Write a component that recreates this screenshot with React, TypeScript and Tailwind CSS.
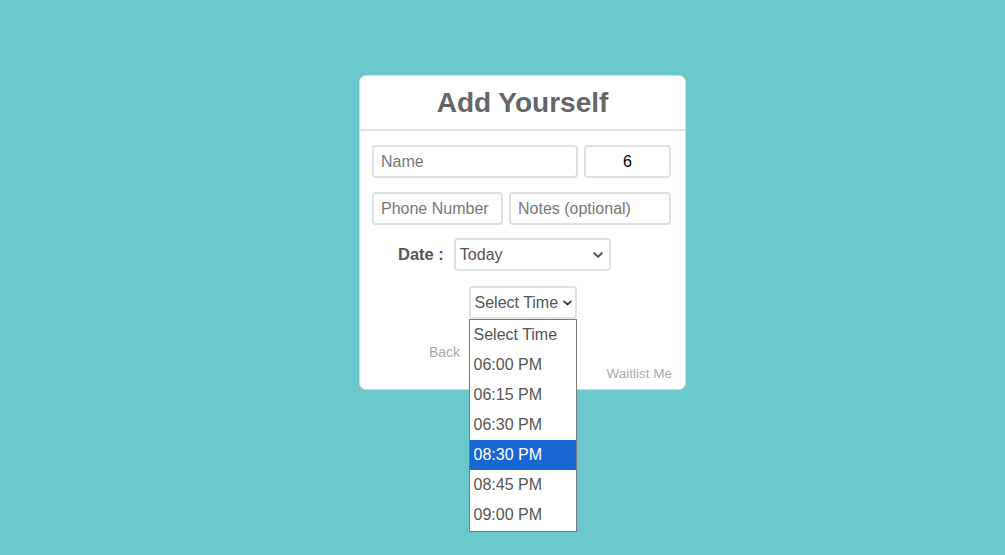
import React from "react";

const times = ["Select Time", "06:00 PM", "06:15 PM", "06:30 PM", "08:30 PM", "08:45 PM", "09:00 PM"];

function Chevron({ className }: { className?: string }) {
  return (
    <svg viewBox="0 0 10 6" className={className} fill="none" stroke="currentColor" strokeWidth="1.8" strokeLinecap="round" strokeLinejoin="round">
      <path d="M1.2 1.2 5 4.8 8.8 1.2" />
    </svg>
  );
}

export default function App() {
  return (
    <div className="min-h-[555px] w-full bg-[#6ac8cc] pl-[359px] pt-[75px] font-['Liberation_Sans',Arial,sans-serif]">
      <div className="relative w-[327px] rounded-[7px] border border-[#d8d8d8] bg-white">
        {/* header */}
        <div className="flex h-[55px] items-center justify-center border-b-2 border-[#e2e2e2]">
          <h1 className="text-[28px] font-bold text-[#666]">Add Yourself</h1>
        </div>

        <div className="flex flex-col px-[12px] pb-[3px] pt-[14px]">
          <div className="flex gap-[6px]">
            <input
              placeholder="Name"
              className="h-[33px] w-[206px] rounded-[4px] border-2 border-[#e0e0e0] px-[7px] text-[16px] text-[#333] placeholder:text-[#777] outline-none"
            />
            <input
              defaultValue="6"
              className="h-[33px] w-[87px] rounded-[4px] border-2 border-[#e0e0e0] px-[7px] text-center text-[16px] text-black outline-none"
            />
          </div>
          <div className="mt-[14px] flex gap-[6px]">
            <input
              placeholder="Phone Number"
              className="h-[33px] w-[131px] rounded-[4px] border-2 border-[#e0e0e0] px-[7px] text-[16px] placeholder:text-[#777] outline-none"
            />
            <input
              placeholder="Notes (optional)"
              className="h-[33px] w-[162px] rounded-[4px] border-2 border-[#e0e0e0] px-[7px] text-[16px] placeholder:text-[#777] outline-none"
            />
          </div>

          <div className="mt-[13px] flex items-center pl-[26px]">
            <span className="text-[16.5px] font-bold text-[#555]">Date :</span>
            <div className="ml-[10px] flex h-[33px] w-[157px] items-center justify-between rounded-[4px] border-2 border-[#e0e0e0] pl-[4px] pr-[6px] text-[16px] text-[#555]">
              <span>Today</span>
              <Chevron className="h-[6px] w-[10px] text-[#444]" />
            </div>
          </div>

          <div className="mt-[15px] flex justify-center">
            <div className="relative">
              <div className="flex h-[33px] w-[108px] items-center justify-between rounded-[4px] border-2 border-[#e0e0e0] pl-[4px] pr-[3px] text-[16px] text-[#555]">
                <span>Select Time</span>
                <Chevron className="h-[6px] w-[9px] text-[#333]" />
              </div>
              <div className="absolute left-0 top-[33px] z-10 w-[108px] border border-[#7a7a7a] bg-white pb-[1px]">
                {times.map((t) => (
                  <div
                    key={t}
                    className={`flex h-[30px] items-center pl-[4px] text-[16px] ${
                      t === "08:30 PM" ? "bg-[#1967d2] text-white" : "text-[#555]"
                    }`}
                  >
                    {t}
                  </div>
                ))}
              </div>
            </div>
          </div>

          <div className="mt-[23px] flex h-[20px] items-center pl-[57px]">
            <span className="text-[14px] text-[#aaa]">Back</span>
          </div>
          <div className="flex h-[24px] items-start justify-end pr-[1px] pt-[2px]">
            <span className="text-[13.5px] text-[#aaa]">Waitlist Me</span>
          </div>
        </div>
      </div>
    </div>
  );
}
